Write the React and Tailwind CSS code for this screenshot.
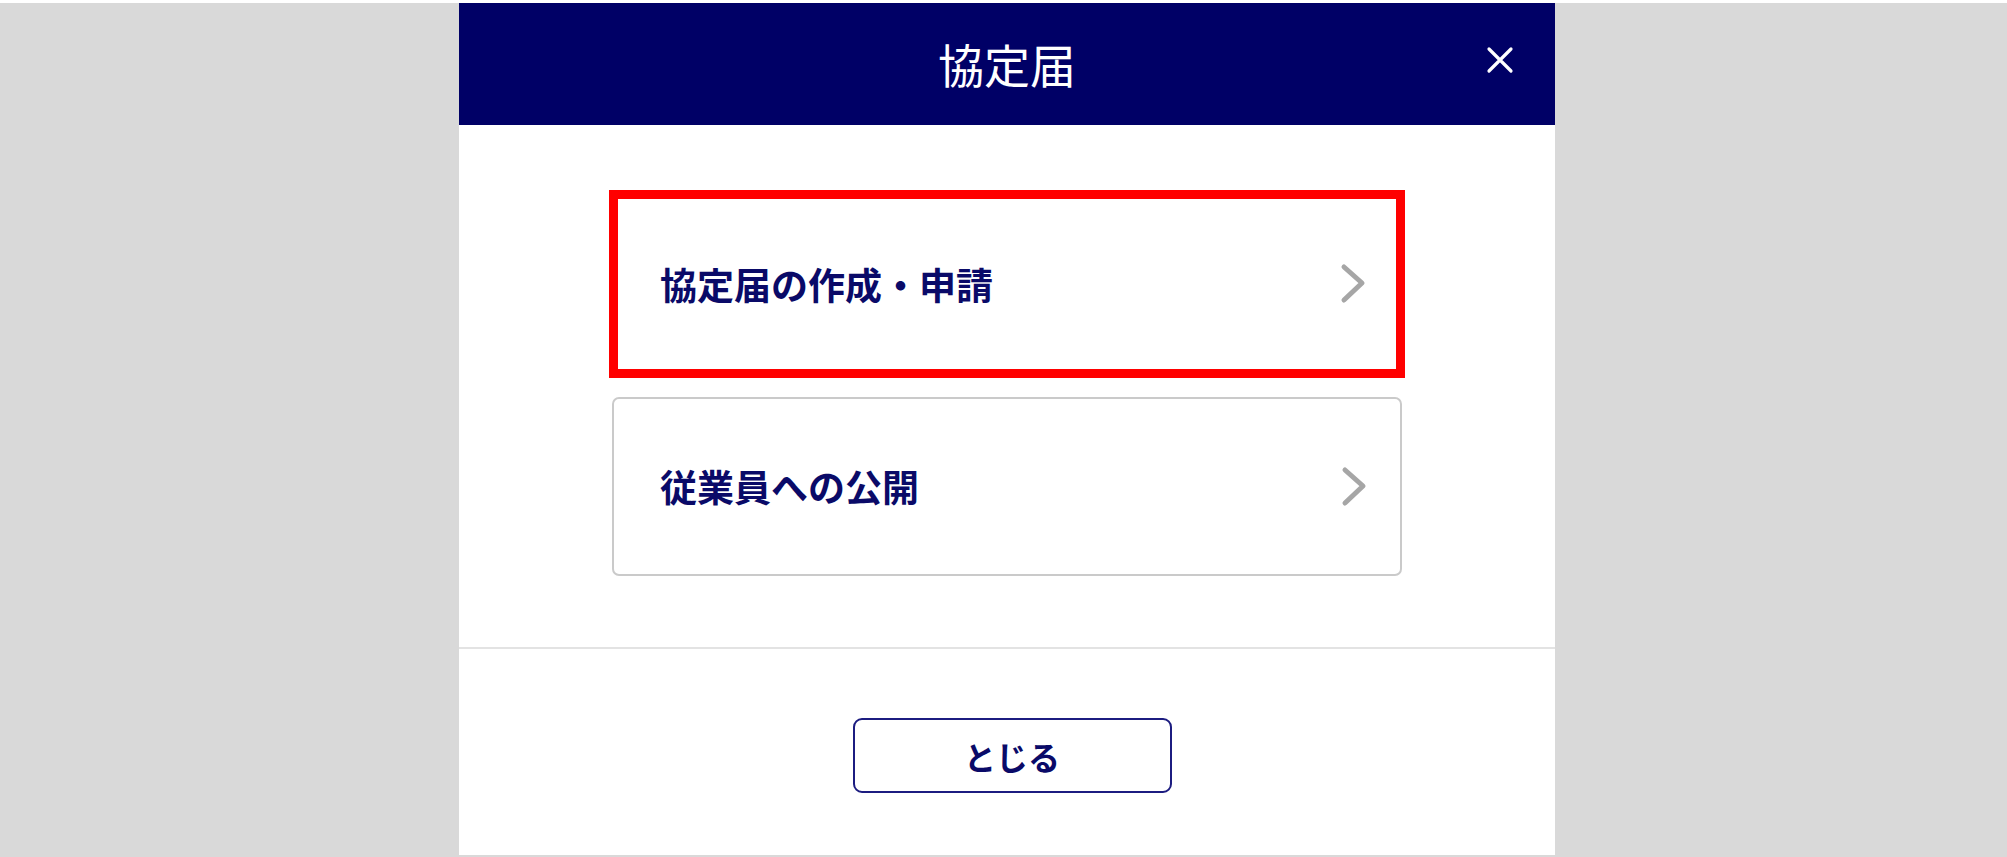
import React from 'react';

const jp = { fontFamily: '"Noto Sans CJK JP", "Noto Sans", sans-serif' };

const Chevron = () => (
  <svg width="26" height="42" viewBox="0 0 26 42" fill="none" className="shrink-0">
    <polyline points="4,4 22,20 4,37" stroke="#a6a6a6" strokeWidth="5" strokeLinecap="round" strokeLinejoin="round" />
  </svg>
);

const App = () => {
  return (
    <div className="w-[2007px] h-[857px] bg-[#d9d9d9] border-t-[3px] border-t-white overflow-hidden" style={jp}>
      <div className="flex justify-center pl-[7px] -mt-[3px]">
        <div className="w-[1096px] h-[855px] bg-white rounded-t-[4px] flex flex-col">
          {/* Header */}
          <div className="relative h-[125px] bg-[#000066] rounded-t-[4px] flex items-center justify-center">
            <h1 className="text-white text-[46px] leading-none font-normal">協定届</h1>
            <button className="absolute right-[41px] top-[46px] w-[28px] h-[28px]">
              <svg width="28" height="28" viewBox="0 0 28 28">
                <path d="M3 3 L25 25 M25 3 L3 25" stroke="white" strokeWidth="3.2" strokeLinecap="round" />
              </svg>
            </button>
          </div>

          {/* Menu items */}
          <div className="px-[150px] pt-[65px] pb-[71px] flex flex-col gap-[19px]">
            <div className="h-[188px] border-[9px] border-[#ff0000] flex items-center justify-between pl-[42px] pr-[30px]">
              <span className="text-[37px] font-bold text-[#0a0a68] leading-none">協定届の作成・申請</span>
              <Chevron />
            </div>
            <div className="mx-[3px] h-[179px] border-2 border-[#cacaca] rounded-[7px] flex items-center justify-between pl-[46px] pr-[33px]">
              <span className="text-[37px] font-bold text-[#0a0a68] leading-none">従業員への公開</span>
              <Chevron />
            </div>
          </div>

          <div className="h-[2px] bg-[#e3e3e3]"></div>

          {/* Footer */}
          <div className="flex justify-center pt-[69px] pl-[10px]">
            <button className="w-[319px] h-[75px] border-2 border-[#1c1c80] rounded-[9px] bg-white flex items-center justify-center">
              <span className="text-[32px] font-bold text-[#0a0a68] leading-none">とじる</span>
            </button>
          </div>
        </div>
      </div>
    </div>
  );
};

export default App;
